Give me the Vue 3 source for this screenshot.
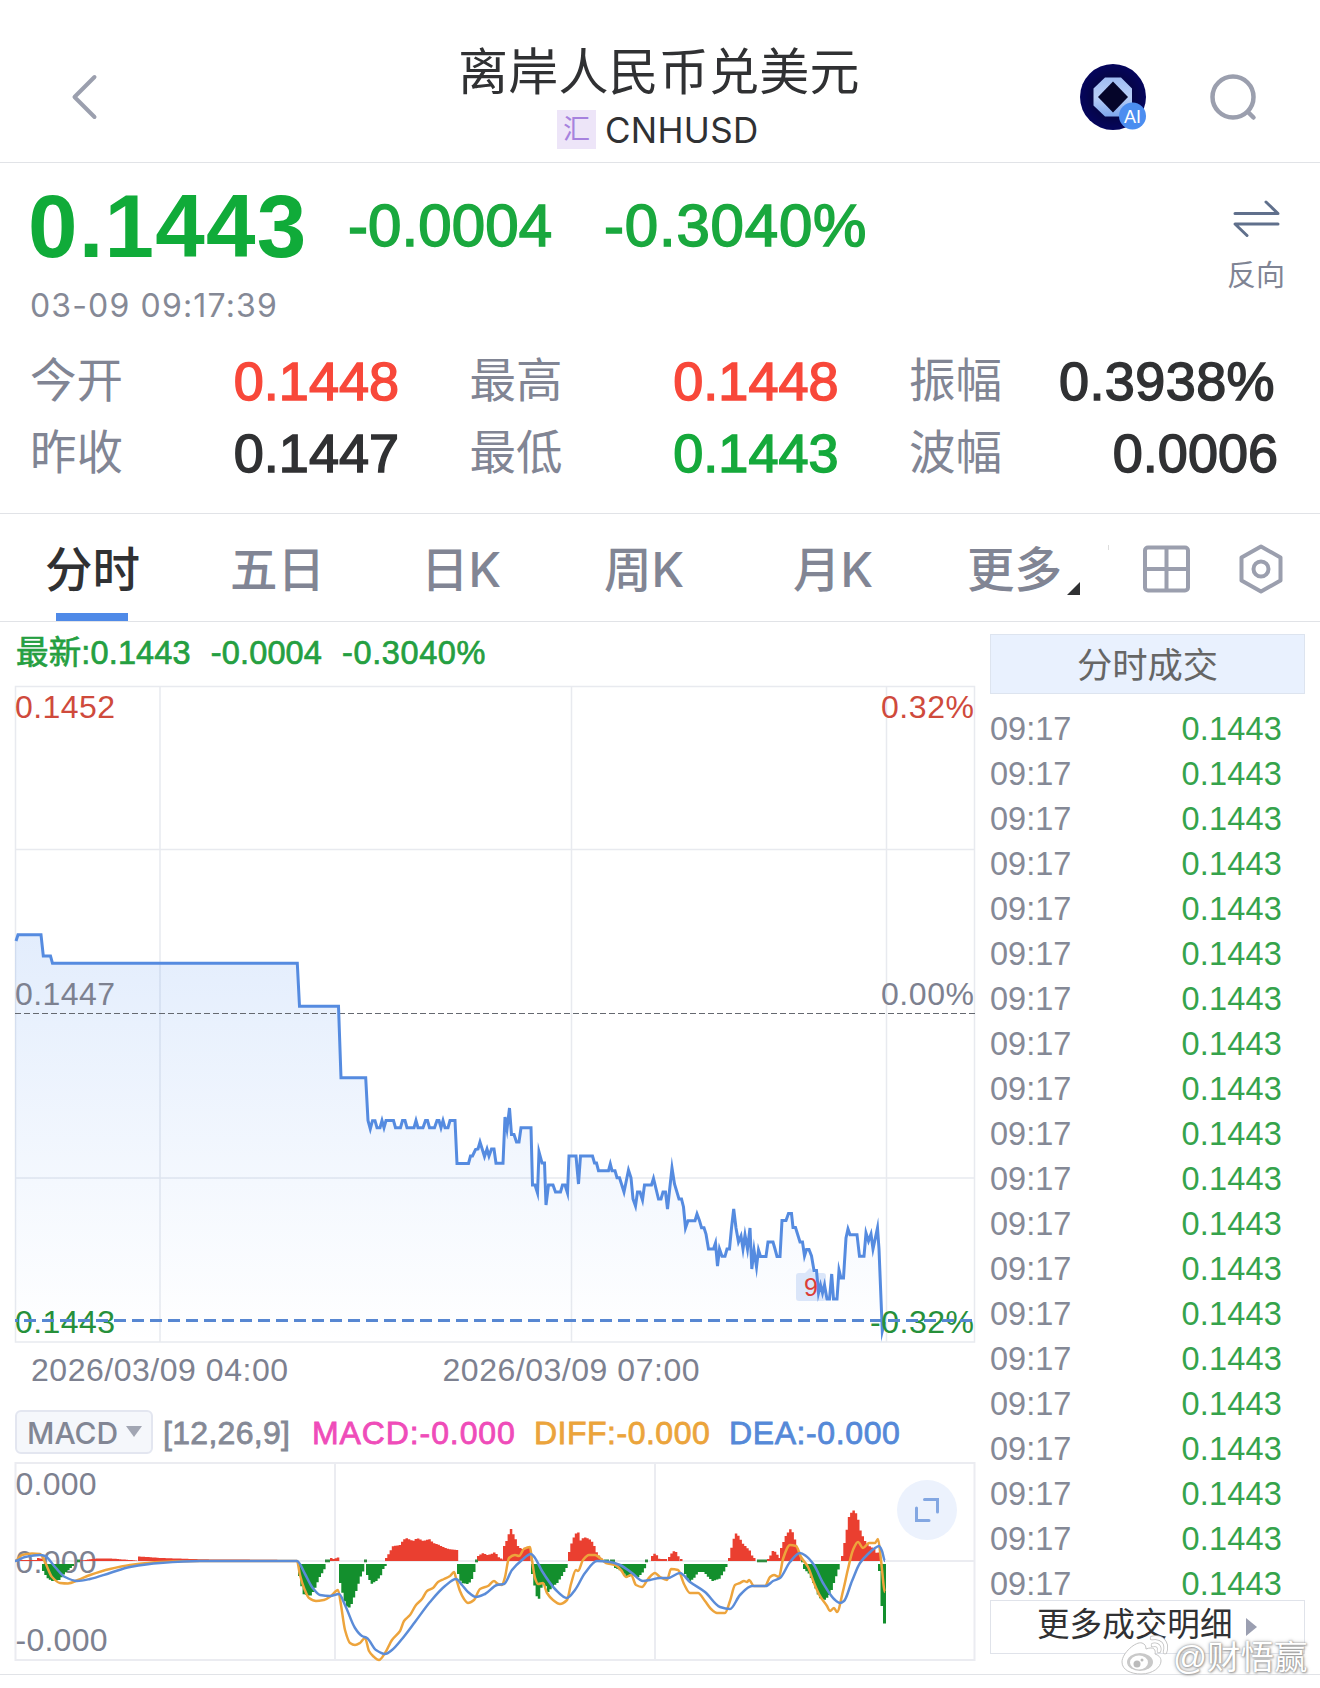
<script setup>
const stats = [
  { label: '今开', value: '0.1448', tone: 'up' },
  { label: '最高', value: '0.1448', tone: 'up' },
  { label: '振幅', value: '0.3938%', tone: 'ratio' },
  { label: '昨收', value: '0.1447', tone: '' },
  { label: '最低', value: '0.1443', tone: 'down' },
  { label: '波幅', value: '0.0006', tone: '' },
]

const trades = Array.from({ length: 20 }, () => ({ time: '09:17', price: '0.1443' }))

const priceLine =
  '16,941 18,934.7 41,934.7 43.3,956 50.5,956 52.5,963.3 297.3,963.3 299.5,1006.3 338.5,1006.3 341,1077.7 365.7,1077.7 368,1120.5 370.3,1129 372.5,1120.7 375,1120.7 377,1127.7 380,1127.7 382,1120.5 384,1127.7 386,1120.5 393.5,1120.5 395.5,1127.7 400.5,1127.7 402.5,1120.5 405,1120.5 407,1127.7 414,1127.7 416,1120.5 418,1127.7 423,1127.7 425.5,1120.5 427.5,1120.5 429.5,1127.7 434.5,1127.7 437,1120.5 439,1120.5 441,1127.7 443,1120.5 445,1127.7 448,1127.7 450,1120.5 455,1120.5 457,1163.5 468.5,1163.5 470.5,1156 472.5,1156 ' +
  '475.5,1149.5 478,1149 480,1142 484.5,1156.500 487,1149 489,1156 491.5,1149 494,1149 496,1163.3 503,1163.3 505,1117 507,1129 509.5,1108 511.5,1134.5 514,1134.5 516.5,1142 519,1142 521,1127.7 531,1127.7 532.5,1185 535,1185 537.5,1193 539,1152 542,1163 544.5,1163 546,1205 548.5,1185 553,1185 555.5,1192 560.5,1192 562.5,1185 565,1185 567.5,1193 569,1156 576,1156 578.5,1184 580.5,1156 592.5,1156 594.5,1163 596.5,1163 598.5,1170.7 608.5,1170.7 610.3,1164 612,1170.7 615,1170.7 617,1177.7 619.5,1177.7 624,1192 628.5,1170 631,1177.7 633,1199 635.5,1206 637.5,1192 640,1192 642.5,1200 644.5,1185 651.5,1185 653.5,1178.5 658.5,1199 661,1199 663,1192 665.5,1192 667.5,1209 672,1168 674.5,1184 679,1199 681.5,1199 ' +
  '683.5,1207 685.5,1228 688,1220.7 695,1220.7 697,1214 699.5,1220.7 701.5,1227.7 704,1227.7 706,1234 708.5,1249 713.5,1249 715.5,1243 717.5,1266 719.5,1249 722,1256.3 725,1256.3 727,1249 729.5,1249 731.5,1228 733.7,1209 736,1228 738.5,1242 741,1236 743,1249 745,1235 747.5,1249 750,1228 751.8,1269 754,1250 756.5,1267 758.5,1250 760.5,1256.5 766,1256.5 768,1242 773,1242 775,1249 777,1256.5 780,1256.5 782,1220.5 786,1220.5 788.5,1213.5 791.5,1213.5 793,1227.5 795.5,1227.5 800,1242 802.5,1242 804.5,1256 806.5,1249.5 809,1249.5 811.5,1256 814,1270.5 816.5,1270.5 818.5,1293 820.5,1285 822.5,1293 824.5,1285 827,1299 829.5,1299 831.7,1274 833.5,1299 837,1299 839,1270 841,1278 843.5,1278 846,1238 848,1229 850,1234.7 857,1234.7 859.5,1256.3 864,1256.3 866,1233 868.5,1241 871,1234 873,1249 877.5,1228 879,1249 881,1299 882.3,1331 884.5,1322'
const priceArea = `15,1342 15,941 ${priceLine} 884.5,1342`

const diffPoints =
  '15,1561 22,1555 32,1553.5 40,1554 45,1562 52,1577 60,1583 68,1583.5 78,1580 90,1575 110,1569 130,1565 160,1562 200,1561 297,1561 300,1575 304,1588 309,1598 316,1601 324,1600 331,1596 338,1590 341,1605 345,1630 350,1643 355,1645 360,1643 365,1638 369,1651 373,1656 379,1660 385,1653 392,1640 400,1631 404,1621 410,1615 416,1605 422,1599 427,1591 433,1588 438,1582 444,1579 450,1576 454,1572 456,1578 460,1591 464,1599 468,1603 474,1600 480,1589 488,1586 494,1581 498,1584 502,1585 505,1577 509,1558 515,1555 519,1556 524,1549 530,1547 532,1560 535,1578 538,1584 543,1583 547,1593 553,1600 560,1604 567,1600 571,1584 576,1570 578,1571 583,1560 589,1555 595,1555 600,1558 606,1563 615,1565 621,1570 626,1577 631,1575 636,1585 642,1587 648,1579 655,1573 660,1577 667,1580 671,1569 678,1570 684,1584 690,1593 698,1593 705,1601 711,1609 717,1613 725,1613 730,1601 735,1585 740,1583 744,1581 747,1582 749,1580 754,1586 765,1586 770,1577 774,1575 779,1577 783,1559 790,1545 796,1546 801,1557 808,1567 814,1583 820,1596 827,1606 830,1611 834,1608 837,1612 843,1591 848,1569 853,1550 858,1542 863,1548 869,1543 875,1543 878,1539 881,1560 885,1592'
const deaPoints =
  '15,1561 25,1557 40,1555 45,1556 55,1567 65,1577 77,1581 90,1579 110,1573 130,1567 160,1563 200,1561 297,1561 305,1574 312,1587 320,1595 330,1596 339,1594 345,1605 355,1628 362,1636 367,1638 376,1650 385,1654 392,1650 402,1639 415,1622 430,1602 445,1586 456,1579 462,1585 468,1592 476,1597 485,1594 497,1585 504,1584 512,1570 522,1560 531,1554 535,1558 542,1571 555,1589 567,1598 575,1590 585,1573 597,1561 610,1562 620,1565 632,1573 643,1581 650,1580 660,1578 668,1578 680,1573 690,1582 705,1592 720,1607 730,1609 740,1595 752,1586 766,1586 773,1581 780,1578 790,1562 800,1553 806,1556 814,1565 823,1583 834,1599 840,1603 844,1601 852,1581 860,1563 868,1554 875,1548 879,1546 882,1551 885,1561'

// Smooth curve through every point, monotone between neighbours
function smooth(points) {
  const p = points.split(' ').map((s) => s.split(',').map(Number))
  const slope = p.map((_, i) => {
    if (i === 0 || i === p.length - 1) return 0
    const a = (p[i][1] - p[i - 1][1]) / (p[i][0] - p[i - 1][0])
    const b = (p[i + 1][1] - p[i][1]) / (p[i + 1][0] - p[i][0])
    return a * b <= 0 ? 0 : (2 * a * b) / (a + b)
  })
  let d = `M${p[0]}`
  for (let i = 1; i < p.length; i++) {
    const h = (p[i][0] - p[i - 1][0]) / 3
    d += `C${(p[i - 1][0] + h).toFixed(1)} ${(p[i - 1][1] + h * slope[i - 1]).toFixed(1)} ${(p[i][0] - h).toFixed(1)} ${(p[i][1] - h * slope[i]).toFixed(1)} ${p[i][0]} ${p[i][1]}`
  }
  return d
}
const diffCurve = smooth(diffPoints)
const deaCurve = smooth(deaPoints)

// Histogram envelopes: [x, y of the bar's far end]
const upRuns = [
  [[15, 1560], [36, 1560]],
  [[37, 1558], [42, 1559]],
  [[80, 1560.5], [95, 1558.5], [110, 1558.5], [135, 1560.5]],
  [[138, 1556.5], [160, 1558], [200, 1559.3], [297, 1560]],
  [[330, 1558], [333, 1559.5], [335, 1558], [339, 1557]],
  [[385, 1558], [388, 1553], [392, 1546], [399, 1545], [402, 1540], [405, 1538], [412, 1541], [416, 1538], [422, 1541], [428, 1539], [432, 1543], [438, 1545], [442, 1547], [447, 1549], [456, 1550]],
  [[477, 1556], [482, 1553], [486, 1555], [490, 1554], [494, 1552], [497, 1557], [503, 1560]],
  [[503, 1546], [507, 1537], [509, 1527], [511, 1532], [514, 1538], [517, 1547], [521, 1549], [525, 1547], [530, 1548]],
  [[568, 1552], [571, 1541], [574, 1534], [577, 1532], [579, 1541], [583, 1537], [588, 1539], [592, 1543], [596, 1554], [600, 1558]],
  [[651, 1556], [654, 1553], [658, 1559]],
  [[660, 1559], [666, 1559]],
  [[668, 1557], [672, 1551], [675, 1552], [678, 1558]],
  [[680, 1559], [682, 1559]],
  [[728, 1558], [732, 1540], [735, 1533], [738, 1537], [741, 1543], [745, 1547], [749, 1551], [751, 1556]],
  [[753, 1558], [755, 1558]],
  [[767, 1559], [769, 1556], [772, 1550], [775, 1553], [779, 1559]],
  [[780, 1548], [785, 1535], [790, 1528], [793, 1537], [796, 1548], [799, 1555]],
  [[841, 1556], [845, 1533], [848, 1516], [852, 1510], [856, 1515], [859, 1530], [863, 1540], [868, 1546], [873, 1549], [876, 1554], [879, 1551]],
]
const downRuns = [
  [[42, 1571], [46, 1578], [51, 1581], [58, 1580], [63, 1574], [68, 1569], [73, 1565]],
  [[298, 1576], [302, 1594], [309, 1596], [313, 1590], [318, 1578], [325, 1566]],
  [[339, 1583], [343, 1600], [347, 1609], [350, 1605], [355, 1591], [360, 1575], [364, 1567]],
  [[366, 1575], [370, 1584], [375, 1581], [379, 1577], [382, 1569], [385, 1565]],
  [[457, 1574], [460, 1583], [467, 1584], [470, 1581], [473, 1572], [475, 1567]],
  [[531, 1574], [534, 1589], [537, 1603], [540, 1588], [543, 1582], [547, 1592], [551, 1587], [556, 1583], [560, 1577], [564, 1570], [567, 1565]],
  [[614, 1568], [622, 1572], [626, 1578], [631, 1575], [637, 1577], [642, 1572], [645, 1565]],
  [[684, 1574], [688, 1582], [693, 1578], [697, 1572], [703, 1572], [707, 1577], [711, 1581], [718, 1579], [722, 1573], [726, 1565]],
  [[803, 1569], [808, 1574], [813, 1585], [818, 1598], [824, 1600], [829, 1594], [833, 1582], [838, 1567]],
]
const specks = [[77, 3], [325, 5], [364, 3], [475, 3], [604, 5], [610, 5], [645, 3], [757, 10], [801, 3]]

// One bar per minute along each envelope
function barsPath(runs, base) {
  const step = 2.28
  let d = ''
  for (const run of runs) {
    const end = run[run.length - 1][0]
    for (let x = run[0][0]; x < end; x += step) {
      let i = 0
      while (i < run.length - 2 && run[i + 1][0] < x) i++
      const [x0, y0] = run[i]
      const [x1, y1] = run[i + 1]
      const y = y0 + ((y1 - y0) * (x - x0)) / (x1 - x0)
      d += `M${x.toFixed(1)} ${base}V${y.toFixed(1)}h2.5V${base}z`
    }
  }
  return d
}
const upBars = barsPath(upRuns, 1561)
const downBars = barsPath(downRuns, 1564)
</script>

<template>
  <div class="page">
    <header class="header">
      <svg class="back" width="40" height="56" viewBox="0 0 40 56"><path d="M27.500 8 7.500 28l20 20" /></svg>
      <div class="heading">
        <h1>离岸人民币兑美元</h1>
        <div class="code"><span class="badge">汇</span><span class="symbol">CNHUSD</span></div>
      </div>
      <svg class="ai" width="68" height="68" viewBox="0 0 68 68">
        <defs>
          <linearGradient id="oct" x1="0" y1="0" x2="0" y2="1"><stop offset="0" stop-color="#9fbcf2" /><stop offset=".5" stop-color="#b9cff8" /><stop offset="1" stop-color="#7ea6ec" /></linearGradient>
          <radialGradient id="night"><stop offset="0" stop-color="#050527" /><stop offset="1" stop-color="#05055c" /></radialGradient>
        </defs>
        <circle cx="34" cy="34" r="33" fill="url(#night)" />
        <path d="M26 14.500h16L53 25.500v17L42 53.500H26L14.500 42.500v-17z" fill="url(#oct)" />
        <path d="M34 18.500 49 34 34 49.500 19 34z" fill="#050529" />
        <circle cx="53.500" cy="53" r="13.500" fill="#4b8df0" />
        <text x="53.500" y="59.500" text-anchor="middle" font-size="18" fill="#fff">AI</text>
      </svg>
      <svg class="search" width="50" height="50" viewBox="0 0 50 50"><circle cx="25" cy="25" r="20.500" /><path d="m40 40 5.500 5.500" /></svg>
    </header>

    <section class="quote">
      <div class="now">
        <span class="last">0.1443</span>
        <span class="delta">-0.0004</span>
        <span class="delta pct">-0.3040%</span>
        <div class="reverse">
          <svg width="50" height="42" viewBox="0 0 50 42"><path d="M4 15.500h43L35 4M47 26H4l12 11.500" /></svg>
          <span>反向</span>
        </div>
      </div>
      <div class="stamp">03-09 09:17:39</div>
      <div class="stats">
        <div v-for="s in stats" :key="s.label" class="stat">
          <span class="label">{{ s.label }}</span><span class="value" :class="s.tone">{{ s.value }}</span>
        </div>
      </div>
    </section>

    <nav class="tabs">
      <span class="tab active">分时</span>
      <span class="tab t2">五日</span>
      <span class="tab t3">日K</span>
      <span class="tab t4">周K</span>
      <span class="tab t5">月K</span>
      <span class="tab t6">更多<i class="corner"></i></span>
      <i class="tick"></i>
      <svg class="grid" width="50" height="52" viewBox="0 0 50 52"><rect x="4" y="4.500" width="43" height="43" rx="3" /><path d="M25.500 4.500v43M4 26h43" /></svg>
      <svg class="hex" width="50" height="54" viewBox="0 0 50 54"><path d="M25 4.500 44.500 15.500v23L25 49.500 5.500 38.500v-23z" stroke-linejoin="round" /><circle cx="25" cy="27" r="7.500" /></svg>
    </nav>

    <main class="body">
      <div class="charts">
        <div class="latest"><span>最新:0.1443</span><span class="d1">-0.0004</span><span class="d2">-0.3040%</span></div>
        <svg class="price" width="982" height="714" viewBox="0 680 982 714">
          <defs>
            <linearGradient id="fill" gradientUnits="userSpaceOnUse" x1="0" y1="935" x2="0" y2="1342">
              <stop offset="0" stop-color="#4f8ff0" stop-opacity=".16" />
              <stop offset="1" stop-color="#4f8ff0" stop-opacity="0" />
            </linearGradient>
          </defs>
          <g class="rules"><path d="M15.500 686.500H974.500V1342H15.500zM160 686v656M571.500 686v656M886.500 686v656M15 849.500h960M15 1178h960" /></g>
          <polygon :points="priceArea" fill="url(#fill)" />
          <path class="mid" d="M15 1013.500h960" />
          <g class="axis">
            <text class="red" x="15" y="718" textLength="100">0.1452</text>
            <text class="red" x="974" y="718" text-anchor="end" textLength="93">0.32%</text>
            <text x="15" y="1005" textLength="100">0.1447</text>
            <text x="974" y="1005" text-anchor="end" textLength="93">0.00%</text>
            <text class="green" x="15" y="1333" textLength="100">0.1443</text>
            <text x="31" y="1381" textLength="257">2026/03/09 04:00</text>
            <text x="442.500" y="1381" textLength="257">2026/03/09 07:00</text>
          </g>
          <path class="level" d="M15 1320.500h960" />
          <path d="M799 1273h6l5-5 5 5h8q3 0 3 3v22q0 3-3 3h-24q-3 0-3-3v-22q0-3 3-3z" fill="#d5e2f8" fill-opacity=".85" />
          <polyline class="line" :points="priceLine" />
          <text x="811" y="1296" text-anchor="middle" font-size="25" fill="#dc3d36">9</text>
          <g class="axis"><text class="green" x="974" y="1333" text-anchor="end" textLength="104">-0.32%</text></g>
          <path class="level over" d="M888 1320.500h87" />
        </svg>

        <div class="legend">
          <span class="pill">MACD<i></i></span>
          <span class="params">[12,26,9]</span>
          <span class="macd">MACD:-0.000</span>
          <span class="diff">DIFF:-0.000</span>
          <span class="dea">DEA:-0.000</span>
        </div>
        <svg class="macd-chart" width="982" height="202" viewBox="0 1460 982 202">
          <g class="rules thick"><path d="M15.500 1463H974.500V1660H15.500zM335 1463v196M655 1463v196M15 1561h960" /></g>
          <g class="axis">
            <text x="15.500" y="1495" textLength="81">0.000</text>
            <text x="15.500" y="1573" textLength="81">0.000</text>
            <text x="15.500" y="1651" textLength="92">-0.000</text>
          </g>
          <path :d="upBars" fill="#ea3f30" />
          <path :d="downBars" fill="#138f2d" />
          <path d="M878 1564h3v7h-3zM880.500 1564h3.500v42h-3.500zM883 1564h3v59.500h-3z" fill="#138f2d" />
          <rect v-for="[x, w] in specks" :key="x" :x="x" y="1559.500" :width="w" height="2.800" fill="#2f8b40" />
          <path class="curve" :d="diffCurve" stroke="#eda43c" />
          <path class="curve" :d="deaCurve" stroke="#5b8cd8" />
          <circle cx="927" cy="1510" r="30" fill="#ecf2fd" />
          <path d="M924.500 1499.500h13v12.500M916.500 1508v12.500h12.500" fill="none" stroke="#83a7e2" stroke-width="3" stroke-linecap="round" />
        </svg>
      </div>

      <aside class="trades">
        <div class="trades-head">分时成交</div>
        <ul>
          <li v-for="(t, i) in trades" :key="i"><span>{{ t.time }}</span><b>{{ t.price }}</b></li>
        </ul>
        <div class="more"><span>更多成交明细</span><i></i></div>
      </aside>
    </main>

    <div class="watermark">
      <svg width="52" height="42" viewBox="0 0 52 42">
        <path d="M23 9c-6-2-20 10-20 19 0 8 9 12 19 12 12 0 20-7 20-13 0-4-3-6-6-7 1-4-1-8-9-5 0-3-1-5-4-6z" fill="#fff" stroke="#c4c4c4" stroke-width="1" />
        <ellipse cx="21" cy="28" rx="13" ry="9" fill="#c9c9c9" />
        <ellipse cx="20" cy="28.500" rx="9" ry="7" fill="#fff" />
        <circle cx="18" cy="30" r="3.500" fill="#bbb" /><circle cx="23" cy="26" r="1.500" fill="#bbb" />
        <path d="M33 4c10-2 16 5 13 14M34 11c5-1 7 2 6 6" fill="none" stroke="#bdbdbd" stroke-width="4.500" stroke-linecap="round" />
        <path d="M33 4c10-2 16 5 13 14M34 11c5-1 7 2 6 6" fill="none" stroke="#fff" stroke-width="3" stroke-linecap="round" />
      </svg>
      <span>@财悟赢</span>
    </div>
  </div>
</template>

<style>
body { background: #fff; }
</style>

<style scoped>
.page {
  position: relative;
  width: 1320px;
  height: 1688px;
  overflow: hidden;
  background: #fff;
  color: #303133;
  font-family: "Liberation Sans", "Noto Sans CJK SC", sans-serif;
}
svg { display: block; flex: none; }
i { font-style: normal; }
span { white-space: nowrap; }

.header { display: flex; height: 163px; border-bottom: 1.500px solid #e1e3e7; box-sizing: border-box; }
.back { margin: 69px 0 0 67px; fill: none; stroke: #9b9fae; stroke-width: 4; stroke-linecap: round; stroke-linejoin: round; }
.heading { width: 420px; margin-left: 342px; }
h1 { margin: 44px 0 0 9px; font-size: 50px; line-height: 58px; font-weight: 400; letter-spacing: .2px; white-space: nowrap; }
.code { display: flex; align-items: center; margin: 8px 0 0 108px; height: 39px; }
.badge { width: 39px; height: 39px; background: #ede5f8; color: #a682de; font-size: 27px; line-height: 41px; text-align: center; }
.symbol { margin-left: 9px; font-family: Inter, sans-serif; font-size: 35px; line-height: 41px; letter-spacing: .3px; padding-top: 1px; }
.ai { margin: 63px 0 0 210px; }
.search { margin: 72px 0 0 61px; fill: none; stroke: #9b9fae; stroke-width: 4.500; stroke-linecap: round; }

.quote { height: 351px; border-bottom: 1.500px solid #e1e3e7; box-sizing: border-box; }
.now { display: flex; height: 118px; padding-left: 28px; color: #10ab39; }
.last { width: 320px; font-size: 89px; font-weight: 700; line-height: 126px; letter-spacing: 1.200px; }
.delta { width: 256px; padding-top: 3px; font-size: 60px; line-height: 120px; -webkit-text-stroke: 1.600px #1aa83e; color: #1aa83e; letter-spacing: .1px; }
.pct { letter-spacing: .8px; }
.reverse { width: 62px; margin: 35px 0 0 366px; color: #7f8494; font-size: 29px; }
.reverse svg { margin-left: 5px; fill: none; stroke: #60708c; stroke-width: 3; stroke-linecap: round; stroke-linejoin: round; }
.reverse span { display: block; margin: 18px 0 0 1px; line-height: 36px; }
.stamp { height: 50px; padding-left: 30px; font-family: Inter, sans-serif; font-size: 32px; line-height: 50px; letter-spacing: 1.150px; color: #858996; }
.stats { display: grid; grid-template-columns: repeat(3, 439.500px); grid-auto-rows: 72px; margin-top: 13px; padding-left: 30px; }
.stat { display: flex; justify-content: space-between; width: 369px; line-height: 72px; }
.label { padding-top: 1px; font-size: 46.500px; color: #818594; }
.value { padding-top: 1px; font-size: 54px; -webkit-text-stroke: 1.500px currentColor; }
.ratio { margin-right: 3px; letter-spacing: .4px; }
.up { color: #f8483a; }
.down { color: #15a93b; }

.tabs { display: flex; height: 108px; border-bottom: 1.500px solid #e1e3e7; box-sizing: border-box; }
.tab { position: relative; font-family: Inter, "Noto Sans CJK SC", sans-serif; font-size: 47.500px; font-weight: 500; line-height: 111px; color: #818594; }
.tab.active { width: 93px; margin-left: 45px; color: #303133; }
.active::after { content: ""; position: absolute; left: 11px; bottom: 0; width: 72px; height: 8px; background: #4f8ae8; }
.t2 { width: 93px; margin-left: 92px; }
.t3 { width: 80px; margin-left: 98px; }
.t4 { width: 80px; margin-left: 103px; }
.t5 { width: 80px; margin-left: 109px; }
.t6 { width: 93px; margin-left: 94px; }
.corner { position: absolute; left: 100px; top: 68px; border-left: 13px solid transparent; border-bottom: 13px solid #303133; }
.tick { width: 1px; height: 5px; margin: 31px 0 0 48px; background: #ddd; }
.grid { margin: 29px 0 0 32px; fill: none; stroke: #9b9fae; stroke-width: 4; }
.hex { margin: 28px 0 0 45px; fill: none; stroke: #9b9fae; stroke-width: 4; }

.body { display: flex; height: 1052px; border-bottom: 1.500px solid #e1e3e7; }
.charts { width: 990px; }
.latest { display: flex; height: 58px; padding-left: 16px; font-size: 32.500px; line-height: 62px; letter-spacing: .15px; color: #259f41; -webkit-text-stroke: .7px #259f41; }
.d1 { margin-left: 20px; }
.d2 { margin-left: 20px; letter-spacing: .6px; }
.rules { fill: none; stroke: #e8eaef; stroke-width: 1.500; }
.thick { stroke: #ebecf1; stroke-width: 2; }
.mid { stroke: #656970; stroke-width: 1.200; stroke-dasharray: 6 3; }
.level { stroke: #5787d2; stroke-width: 3; stroke-dasharray: 12 6; stroke-dashoffset: 9; }
.over { stroke-dashoffset: 0; }
.line { fill: none; stroke: #558be0; stroke-width: 3; stroke-linejoin: miter; stroke-miterlimit: 8; }
.axis { font-size: 32px; fill: #7d8190; }
.red { fill: #cf4a3c; }
.green { fill: #26903a; }
.legend { display: flex; height: 66px; padding: 16px 0 0 15px; box-sizing: border-box; font-size: 32px; line-height: 46px; letter-spacing: .6px; }
.pill { display: flex; align-items: center; width: 138px; height: 44px; box-sizing: border-box; padding: 1px 0 0 10px; border: 2px solid #e3e6f0; border-radius: 6px; background: #f5f7fb; color: #828694; font-family: Inter, sans-serif; font-size: 30px; font-weight: 500; letter-spacing: 0; }
.pill i { margin-left: 8px; margin-top: -3px; border: 8px solid transparent; border-top: 11px solid #a2a6b3; border-bottom: 0; }
.params, .macd, .diff, .dea { -webkit-text-stroke: .8px currentColor; }
.params { width: 140px; margin-left: 10px; color: #858996; letter-spacing: .3px; }
.macd { width: 222px; margin-left: 9px; color: #ef4cb9; letter-spacing: .9px; }
.diff { width: 195px; color: #eba43b; letter-spacing: .5px; }
.dea { color: #5589d8; }
.curve { fill: none; stroke-width: 2.500; stroke-linejoin: round; }

.trades { width: 315px; padding-top: 12px; }
.trades-head { height: 60px; box-sizing: border-box; border: 1px solid #dde4ef; background: #e9f1fe; color: #666; font-size: 35.300px; line-height: 61px; text-align: center; }
ul { margin: 12px 0 0; padding: 0; list-style: none; }
li { display: flex; justify-content: space-between; height: 45px; padding-right: 23px; font-size: 32.500px; line-height: 47px; color: #858996; }
li b { font-weight: 400; color: #35a34c; letter-spacing: .2px; }
.more { display: flex; align-items: center; height: 54px; margin-top: -6px; box-sizing: border-box; padding-left: 46px; border: 1px solid #e0e3ea; font-size: 32.600px; color: #303133; }
.more span { margin-top: -5px; line-height: 34px; }
.more i { margin-left: 14px; border: 9px solid transparent; border-left: 11px solid #9b9fb1; border-right: 0; }

.watermark { position: absolute; left: 1119px; top: 1634px; display: flex; align-items: center; color: #fff; font-size: 33.500px; line-height: 36px; text-shadow: 0 0 2px #888, 1px 1px 2px #aaa, 0 0 4px #bbb; }
.watermark span { margin: 5px 0 0 2px; }
</style>
